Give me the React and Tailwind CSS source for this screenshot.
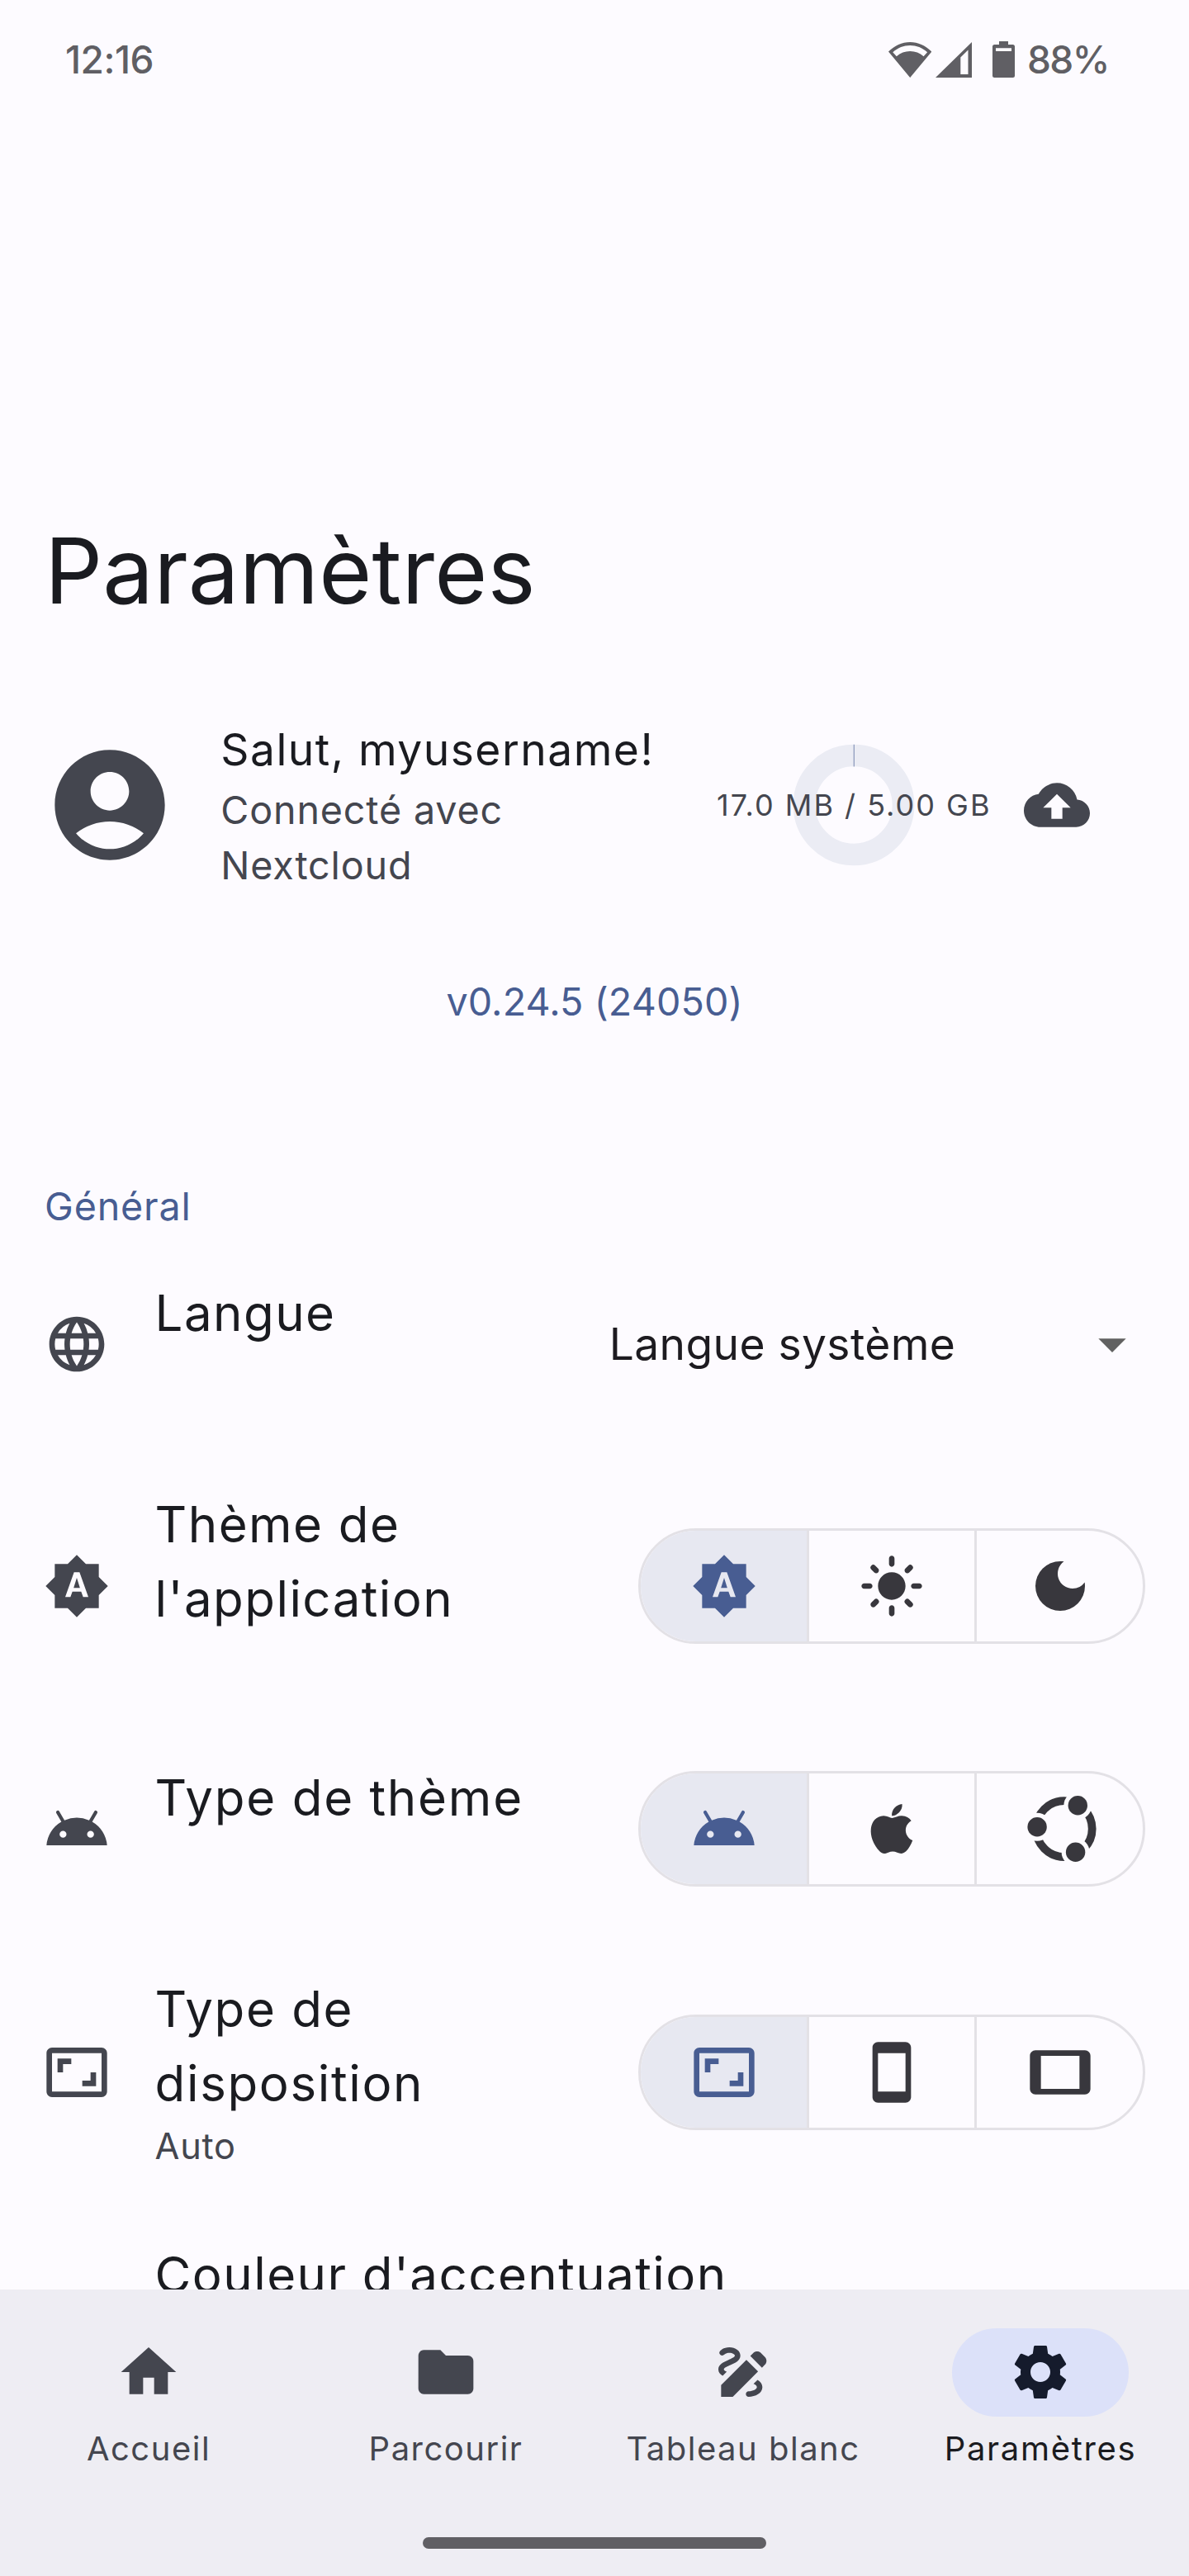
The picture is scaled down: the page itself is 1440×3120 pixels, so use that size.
import {
  MdAccountCircle,
  MdAndroid,
  MdArrowDropDown,
  MdAspectRatio,
  MdBackup,
  MdBrightnessAuto,
  MdDarkMode,
  MdDraw,
  MdFolder,
  MdHome,
  MdLanguage,
  MdLightMode,
  MdSettings,
  MdSmartphone,
  MdTablet,
} from "react-icons/md";

function AppleIcon({ className }) {
  return (
    <svg viewBox="0 0 24 24" fill="currentColor" className={className}>
      <path d="M17.05 20.28c-.98.95-2.05.8-3.08.35-1.09-.46-2.09-.48-3.24 0-1.44.62-2.2.44-3.06-.35C2.79 15.25 3.51 7.59 9.05 7.31c1.35.07 2.29.74 3.08.8 1.18-.24 2.31-.93 3.57-.84 1.51.12 2.65.72 3.4 1.8-3.12 1.87-2.38 5.98.48 7.13-.57 1.5-1.31 2.99-2.54 4.09l.01-.01zM12.03 7.25c-.15-2.23 1.66-4.07 3.74-4.25.29 2.58-2.34 4.5-3.74 4.25z" />
    </svg>
  );
}

function UbuntuIcon() {
  return (
    <svg viewBox="13.4 14.7 80 80" fill="currentColor" className="size-[80px] shrink-0 overflow-visible">
      <mask id="ubuntu-gaps" maskUnits="userSpaceOnUse" x="0" y="0" width="110" height="110">
        <rect width="110" height="110" fill="white" />
        <circle cx="25.5" cy="52.5" r="17" fill="black" />
        <circle cx="74.7" cy="26.5" r="17" fill="black" />
        <circle cx="72" cy="83" r="17" fill="black" />
      </mask>
      <circle cx="58.2" cy="54.8" r="33.9" fill="none" stroke="currentColor" strokeWidth="9.8" mask="url(#ubuntu-gaps)" />
      <circle cx="25.5" cy="52.5" r="11.7" />
      <circle cx="74.7" cy="26.5" r="11.7" />
      <circle cx="72" cy="83" r="11.7" />
    </svg>
  );
}

function StatusBar() {
  return (
    <div className="flex h-[144px] shrink-0 items-center justify-between pr-[97px] pl-[79px] text-[46px] font-medium text-[#605f64]">
      <span className="tracking-[-0.5px]">12:16</span>
      <div className="flex items-center">
        <svg viewBox="0 0 52.4 43" fill="currentColor" className="h-[43px] w-[52.4px]">
          <path
            fillRule="evenodd"
            d="M0 11.6C7.4 4.2 16.4 0 26.2 0S45 4.2 52.4 11.6L26.2 43zM5.300 12.2L9.8 17.3C14.5 13 20 11 26.2 11S37.9 13 42.6 17.3L47.1 12.2C41 6.6 34 3.9 26.2 3.9S11.400 6.6 5.3 12.2z"
          />
        </svg>
        <svg viewBox="0 0 44 43" fill="currentColor" className="ml-[5px] h-[43px] w-[44px]">
          <path fillRule="evenodd" d="M0 43L44 0V43zM30.3 18.5V39H39.5V9.5z" />
        </svg>
        <svg viewBox="0 0 27 44" fill="currentColor" className="ml-[25px] h-[44px] w-[27px]">
          <path
            fillRule="evenodd"
            d="M8 0H19V4H24.5A2.500 2.500 0 0 1 27 6.5V41.5A2.500 2.500 0 0 1 24.5 44H2.5A2.500 2.500 0 0 1 0 41.5V6.5A2.500 2.500 0 0 1 2.5 4H8zM4 8.2V12H23V8.200z"
          />
        </svg>
        <span className="ml-[15px] tracking-[-1.5px]">88%</span>
      </div>
    </div>
  );
}

function Profile() {
  return (
    <div className="mt-[110px] flex h-[213.3px] shrink-0 items-center pl-[53.3px]">
      <MdAccountCircle className="size-[160px] shrink-0 text-[#44464f]" />
      <div className="ml-[54px] w-[600px]">
        <p className="text-[53.33px] leading-[80px] tracking-[1.46px] text-[#1a1b20]">Salut, myusername!</p>
        <p className="text-[46.67px] leading-[66.67px] tracking-[0.83px] text-[#44464f]">
          Connecté avec
          <br />
          Nextcloud
        </p>
      </div>
      <div className="grid w-[334px] place-items-center">
        <svg viewBox="0 0 148 148" className="col-start-1 row-start-1 size-[148px]">
          <circle cx="74" cy="74" r="60" fill="none" stroke="#ebecf4" strokeWidth="26.7" />
          <path d="M74.3 0.7V27.4" stroke="#485d92" strokeOpacity="0.6" strokeWidth="1.2" />
        </svg>
        <span className="col-start-1 row-start-1 text-[36px] leading-[48px] tracking-[2px] whitespace-nowrap text-[#44464f]">
          17.0 MB / 5.00 GB
        </span>
      </div>
      <MdBackup className="ml-[38.5px] size-[80px] shrink-0 text-[#44464f]" />
    </div>
  );
}

function Segmented({ items }) {
  return (
    <div className="flex h-[140px] w-[613.3px] shrink-0 overflow-hidden rounded-full border-[3.3px] border-[#e3e1e6] text-[#38373d]">
      {items.map((icon, i) => (
        <div
          key={i}
          className={
            i === 0
              ? "grid flex-1 place-items-center bg-[#e7e8f1] text-[#485d92]"
              : "grid flex-1 place-items-center border-l-[3.3px] border-[#e3e1e6]"
          }
        >
          {icon}
        </div>
      ))}
    </div>
  );
}

function Row({ icon, title, subtitle, className, tracking = "tracking-[1.43px]", children }) {
  return (
    <div className={`flex shrink-0 items-center pr-[53.3px] pl-[53.3px] ${className}`}>
      <div className="size-[80px] shrink-0 text-[#44464f]">{icon}</div>
      <div className="ml-[54.3px] flex-1 self-start">
        <p className={`text-[60px] leading-[90px] whitespace-pre-line text-[#1a1b20] ${tracking}`}>{title}</p>
        {subtitle && (
          <p className="text-[43.33px] leading-[62px] tracking-[0.7px] text-[#44464f]">{subtitle}</p>
        )}
      </div>
      {children}
    </div>
  );
}

const tabs = [
  { label: "Accueil", Icon: MdHome },
  { label: "Parcourir", Icon: MdFolder },
  { label: "Tableau blanc", Icon: MdDraw },
  { label: "Paramètres", Icon: MdSettings, active: true },
];

export default function App() {
  const s = "size-[80px] shrink-0";
  return (
    <div className="flex h-[3120px] w-[1440px] flex-col overflow-hidden bg-[#fdfbff] font-['Inter',sans-serif]">
      <main className="flex h-[2773.3px] shrink-0 flex-col overflow-hidden">
        <StatusBar />
        <h1 className="mt-[480px] shrink-0 pl-[54px] text-[110px] leading-[134px] tracking-[0.12px] text-[#1a1b20]">
          Paramètres
        </h1>
        <Profile />
        <p className="mt-[99px] shrink-0 text-center text-[46.67px] leading-[66.67px] tracking-[0.1px] text-[#485d92]">
          v0.24.5 (24050)
        </p>
        <p className="mt-[180.6px] shrink-0 pl-[54px] text-[46.67px] leading-[66.67px] tracking-[0.83px] text-[#485d92]">
          Général
        </p>
        <Row className="mt-[50.6px] h-[166.4px]" title="Langue" icon={<MdLanguage className={s} />}>
          <div className="flex w-[649px] items-center justify-between">
            <span className="text-[53.33px] leading-[80px] tracking-[0.4px] text-[#1d1b20]">Langue système</span>
            <MdArrowDropDown className="size-[80px] text-[#616161]" />
          </div>
        </Row>
        <Row
          className="mt-[90px] h-[239.6px]"
          title={"Thème de\nl'application"}
          icon={<MdBrightnessAuto className={s} />}
        >
          <Segmented
            items={[<MdBrightnessAuto className={s} />, <MdLightMode className={s} />, <MdDarkMode className={s} />]}
          />
        </Row>
        <Row
          className="mt-[91px] h-[166px]"
          title="Type de thème"
          tracking="tracking-[1.75px]"
          icon={<MdAndroid className={s} />}
        >
          <Segmented items={[<MdAndroid className={s} />, <AppleIcon className={s} />, <UbuntuIcon />]} />
        </Row>
        <Row
          className="mt-[90.4px] h-[243.2px]"
          title={"Type de\ndisposition"}
          tracking="tracking-[1.65px]"
          subtitle="Auto"
          icon={<MdAspectRatio className={s} />}
        >
          <Segmented
            items={[<MdAspectRatio className={s} />, <MdSmartphone className={s} />, <MdTablet className={s} />]}
          />
        </Row>
        <Row className="mt-[78.6px] h-[166px]" title="Couleur d'accentuation" />
      </main>
      <nav className="flex h-[346.7px] shrink-0 flex-col items-center bg-[#eeedf3] pt-[46.7px]">
        <div className="grid w-full grid-cols-4">
          {tabs.map(({ label, Icon, active }) => (
            <div key={label} className="flex flex-col items-center gap-[12px]">
              <div
                className={
                  active
                    ? "grid h-[106.7px] w-[213.3px] place-items-center rounded-full bg-[#dce1f9] text-[#151b2c]"
                    : "grid h-[106.7px] w-[213.3px] place-items-center text-[#44464f]"
                }
              >
                <Icon className={s} />
              </div>
              <span
                className={
                  active
                    ? "text-[40px] leading-[53.3px] tracking-[1.67px] text-[#1a1b20]"
                    : "text-[40px] leading-[53.3px] tracking-[1.5px] text-[#44464f]"
                }
              >
                {label}
              </span>
            </div>
          ))}
        </div>
        <div className="mt-[81.3px] h-[13.3px] w-[416.7px] rounded-full bg-[#605f64]" />
      </nav>
    </div>
  );
}
